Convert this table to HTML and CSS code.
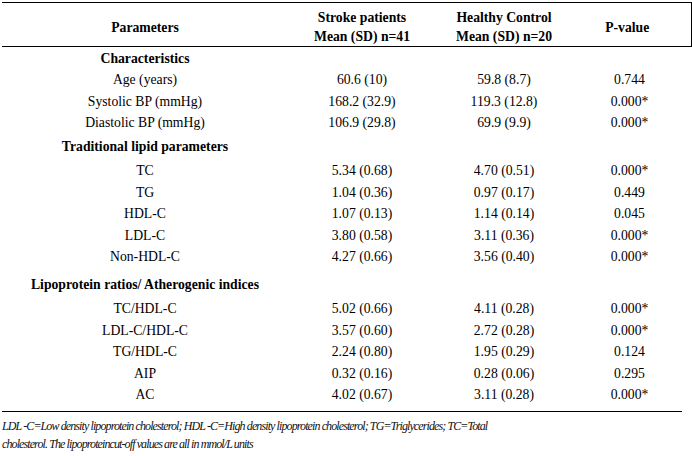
FILE: index.html
```html
<!DOCTYPE html>
<html lang="en">
<head>
<meta charset="utf-8">
<title>Lipid parameters table</title>
<link rel="stylesheet" href="styles.css">
</head>
<body>
<table class="data">
  <colgroup>
    <col class="c1"><col class="c2"><col class="c3"><col class="c4">
  </colgroup>
  <thead>
    <tr>
      <th>Parameters</th>
      <th>Stroke patients<br>Mean (SD) n=41</th>
      <th>Healthy Control<br>Mean (SD) n=20</th>
      <th class="last">P-value</th>
    </tr>
  </thead>
  <tbody>
    <tr class="sec first"><td>Characteristics</td><td></td><td></td><td></td></tr>
    <tr class="t"><td>Age (years)</td><td>60.6 (10)</td><td>59.8 (8.7)</td><td class="p">0.744</td></tr>
    <tr><td>Systolic BP (mmHg)</td><td>168.2 (32.9)</td><td>119.3 (12.8)</td><td class="p">0.000*</td></tr>
    <tr class="t"><td>Diastolic BP (mmHg)</td><td>106.9 (29.8)</td><td>69.9 (9.9)</td><td class="p">0.000*</td></tr>
    <tr class="sec mid"><td>Traditional lipid parameters</td><td></td><td></td><td></td></tr>
    <tr class="t"><td>TC</td><td>5.34 (0.68)</td><td>4.70 (0.51)</td><td class="p">0.000*</td></tr>
    <tr><td>TG</td><td>1.04 (0.36)</td><td>0.97 (0.17)</td><td class="p">0.449</td></tr>
    <tr class="t"><td>HDL-C</td><td>1.07 (0.13)</td><td>1.14 (0.14)</td><td class="p">0.045</td></tr>
    <tr><td>LDL-C</td><td>3.80 (0.58)</td><td>3.11 (0.36)</td><td class="p">0.000*</td></tr>
    <tr class="t"><td>Non-HDL-C</td><td>4.27 (0.66)</td><td>3.56 (0.40)</td><td class="p">0.000*</td></tr>
    <tr class="sec low"><td>Lipoprotein ratios/ Atherogenic indices</td><td></td><td></td><td></td></tr>
    <tr class="t"><td>TC/HDL-C</td><td>5.02 (0.66)</td><td>4.11 (0.28)</td><td class="p">0.000*</td></tr>
    <tr><td>LDL-C/HDL-C</td><td>3.57 (0.60)</td><td>2.72 (0.28)</td><td class="p">0.000*</td></tr>
    <tr class="t"><td>TG/HDL-C</td><td>2.24 (0.80)</td><td>1.95 (0.29)</td><td class="p">0.124</td></tr>
    <tr><td>AIP</td><td>0.32 (0.16)</td><td>0.28 (0.06)</td><td class="p">0.295</td></tr>
    <tr class="t end"><td>AC</td><td>4.02 (0.67)</td><td>3.11 (0.28)</td><td class="p">0.000*</td></tr>
  </tbody>
</table>
<p class="note">LDL -C=Low density lipoprotein cholesterol; HDL -C=High density lipoprotein cholesterol; TG=Triglycerides; TC=Total<br>cholesterol. The lipoproteincut-off values are all in mmol/L units</p>
</body>
</html>
```

FILE: styles.css
```css
html, body {
  margin: 0;
  padding: 0;
  background: #fff;
}

body {
  font-family: "Liberation Serif", "Times New Roman", serif;
  color: #000;
}

.data {
  margin: 2px 0 0 2px;
  width: 689px;
  border-collapse: collapse;
  table-layout: fixed;
  font-size: 13.7px;
}

.c1 { width: 286px; }
.c2 { width: 148px; }
.c3 { width: 136px; }
.c4 { width: 119px; }

.data th {
  box-sizing: border-box;
  font-weight: bold;
  line-height: 19px;
  padding: 5px 0 0;
  height: 43px;
  border-top: 1px solid #000;
  border-bottom: 1px solid #000;
  text-align: center;
  vertical-align: middle;
}

.data th.last {
  border-right: 1px solid #000;
  padding-right: 8px;
}

.data td {
  box-sizing: border-box;
  padding: 3px 0 0;
  height: 21px;
  line-height: 16px;
  text-align: center;
  vertical-align: middle;
  white-space: nowrap;
}

.data tr.t td { height: 22px; }

.data td.p {
  padding-right: 4px;
}

.data tr.sec td {
  font-weight: bold;
}

.data tr.first td { height: 21px; padding-top: 3px; }
.data tr.mid td { height: 26px; }
.data tr.low td { height: 30px; padding-top: 7px; }
.data tr.end td { height: 28px; padding-bottom: 6px; }

.note {
  margin: 0 0 0 2px;
  width: 680px;
  border-top: 1px solid #000;
  padding-top: 5px;
  font-style: italic;
  font-size: 12px;
  line-height: 18px;
  letter-spacing: -0.9px;
  color: #111;
}
```
